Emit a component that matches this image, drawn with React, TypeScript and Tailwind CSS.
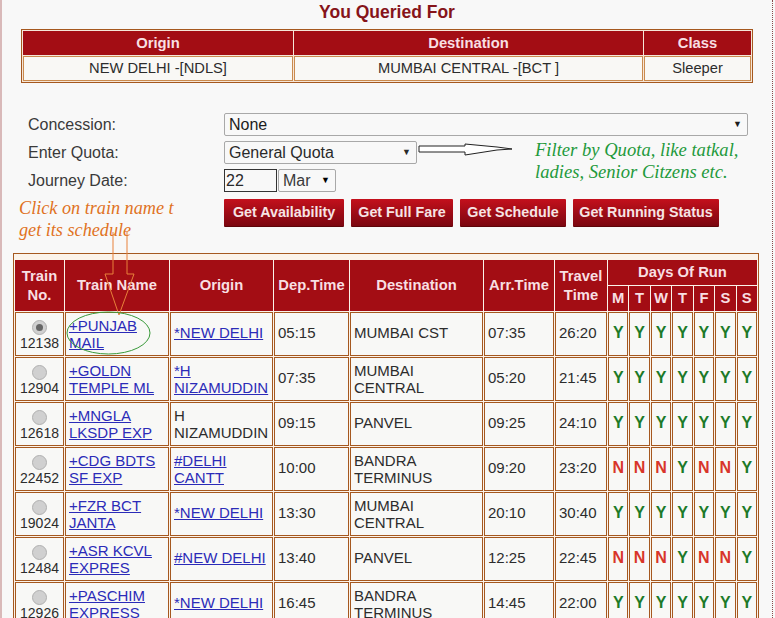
import React from "react";

const F = { fontFamily: '"Liberation Sans", Arial, sans-serif' };
const rows = [
  { no: "12138", sel: true, name: ["+PUNJAB", "MAIL"], o: ["*NEW DELHI"], link: true, dep: "05:15", dest: ["MUMBAI CST"], arr: "07:35", tr: "26:20", d: "YYYYYYY" },
  { no: "12904", name: ["+GOLDN", "TEMPLE ML"], o: ["*H", "NIZAMUDDIN"], link: true, dep: "07:35", dest: ["MUMBAI", "CENTRAL"], arr: "05:20", tr: "21:45", d: "YYYYYYY" },
  { no: "12618", name: ["+MNGLA", "LKSDP EXP"], o: ["H", "NIZAMUDDIN"], link: false, dep: "09:15", dest: ["PANVEL"], arr: "09:25", tr: "24:10", d: "YYYYYYY" },
  { no: "22452", name: ["+CDG BDTS", "SF EXP"], o: ["#DELHI", "CANTT"], link: true, dep: "10:00", dest: ["BANDRA", "TERMINUS"], arr: "09:20", tr: "23:20", d: "NNNYNNY" },
  { no: "19024", name: ["+FZR BCT", "JANTA"], o: ["*NEW DELHI"], link: true, dep: "13:30", dest: ["MUMBAI", "CENTRAL"], arr: "20:10", tr: "30:40", d: "YYYYYYY" },
  { no: "12484", name: ["+ASR KCVL", "EXPRES"], o: ["#NEW DELHI"], link: true, dep: "13:40", dest: ["PANVEL"], arr: "12:25", tr: "22:45", d: "NNNYNNY" },
  { no: "12926", name: ["+PASCHIM", "EXPRESS"], o: ["*NEW DELHI"], link: true, dep: "16:45", dest: ["BANDRA", "TERMINUS"], arr: "14:45", tr: "22:00", d: "YYYYYYY" },
];

const th = "bg-[#a30d14] text-[#f8dfe2] font-bold text-center p-0 leading-[19px] text-[14.8px]";
const td = "border border-[#a5581f] bg-[#f8f8f6] px-[3px] py-0 text-[15px] leading-[17px] align-middle h-[44px]";
const btn = "h-[28px] rounded-[1px] bg-gradient-to-b from-[#c4101c] to-[#7c0710] text-[#f6e4e4] font-bold text-[14.3px] border-b border-[#5e0509]";

function Lines({ l, link }: { l: string[]; link?: boolean }) {
  return (
    <>
      {l.map((t) => (
        <div key={t} className={`${link ? "text-[#2b2bb8] underline" : "text-[#2c2c2c]"} ${l.length === 1 ? "pb-[3px]" : ""}`}>{t}</div>
      ))}
    </>
  );
}

export default function App() {
  return (
    <div style={F} className="relative h-[618px] w-[775px] overflow-hidden bg-[#f8f8f8]">
      <div className="absolute left-0 top-0 h-full w-[2px] bg-[#d9b9b9]" />
      <div className="absolute left-[772px] top-0 h-full border-l border-dotted border-[#8a4a4a]" />

      <div className="pl-[21px] pr-[22px]">
        <h1 className="h-[29px] pt-[2px] text-center text-[17.5px] font-bold leading-[20px] text-[#86141a]">You Queried For</h1>
        <table className="w-[732px] table-fixed border-separate border-spacing-[1px] border border-[#a5581f] bg-[#f6e6d8]">
          <colgroup><col className="w-[270px]" /><col className="w-[349px]" /><col /></colgroup>
          <tbody>
            <tr className="h-[24px]">
              {["Origin", "Destination", "Class"].map((h) => <th key={h} className={th}>{h}</th>)}
            </tr>
            <tr className="h-[25px]">
              {["NEW DELHI -[NDLS]", "MUMBAI CENTRAL -[BCT ]", "Sleeper"].map((c) => (
                <td key={c} className="border border-[#c98a4e] bg-[#f9f8f5] p-0 text-center text-[14.7px] text-[#2c2c2c]">{c}</td>
              ))}
            </tr>
          </tbody>
        </table>
      </div>

      <div className="mt-[30px] grid grid-cols-[196px_auto] gap-y-[5px] pl-[28px] text-[16px] text-[#3a3a3a]">
        <div className="leading-[23px]">Concession:</div>
        <div className="relative flex h-[23px] w-[524px] items-center justify-between rounded-[2px] border border-[#a8a8a8] bg-[#f8f8f8] pl-[4px] pr-[5px] text-[#1c1c1c]">
          None<span className="text-[9px]">▼</span>
        </div>
        <div className="leading-[23px]">Enter Quota:</div>
        <div className="flex h-[23px] w-[193px] items-center justify-between rounded-[2px] border border-[#a8a8a8] bg-[#f8f8f8] pl-[4px] pr-[5px] text-[#2a2a2a]">
          General Quota<span className="text-[9px]">▼</span>
        </div>
        <div className="leading-[23px]">Journey Date:</div>
        <div className="flex gap-[1px]">
          <div className="h-[23px] w-[53px] border border-[#333] pl-[1px] leading-[21px] text-[#2a2a2a]">22</div>
          <div className="flex h-[23px] w-[58px] items-center justify-between rounded-[2px] border border-[#a8a8a8] pl-[4px] pr-[5px]">
            Mar<span className="text-[9px] text-black">▼</span>
          </div>
        </div>
      </div>

      <div className="ml-[224px] mt-[7px] flex gap-[7px]">
        <button className={`${btn} w-[120px]`}>Get Availability</button>
        <button className={`${btn} w-[102px]`}>Get Full Fare</button>
        <button className={`${btn} w-[106px]`}>Get Schedule</button>
        <button className={`${btn} w-[146px]`}>Get Running Status</button>
      </div>

      <div className="ml-[13px] mt-[26px] w-[746px] border border-[#a5581f] bg-[#fbf3ea] pt-[5px]">
        <table className="w-[744px] table-fixed border-separate border-spacing-[1px]">
          <colgroup>
            <col className="w-[49px]" /><col className="w-[104px]" /><col className="w-[103px]" /><col className="w-[75px]" />
            <col className="w-[133px]" /><col className="w-[70px]" /><col className="w-[52px]" />
            <col /><col /><col /><col /><col /><col /><col />
          </colgroup>
          <thead>
            <tr className="h-[25px]">
              <th rowSpan={2} className={th}>Train<br />No.</th>
              <th rowSpan={2} className={th}>Train Name</th>
              <th rowSpan={2} className={th}>Origin</th>
              <th rowSpan={2} className={th}>Dep.Time</th>
              <th rowSpan={2} className={th}>Destination</th>
              <th rowSpan={2} className={th}>Arr.Time</th>
              <th rowSpan={2} className={th}>Travel<br />Time</th>
              <th colSpan={7} className={th}>Days Of Run</th>
            </tr>
            <tr className="h-[25px]">
              {["M", "T", "W", "T", "F", "S", "S"].map((d, i) => <th key={i} className={th}>{d}</th>)}
            </tr>
          </thead>
          <tbody>
            {rows.map((r) => (
              <tr key={r.no}>
                <td className={`${td} !px-0 text-center !text-[14px] text-[#2c2c2c]`}>
                  <div className="mx-auto mt-[3px] flex h-[15px] w-[15px] items-center justify-center rounded-full border border-[#b0b0b0] bg-[#d0d0d0]">
                    {r.sel && <span className="h-[7px] w-[7px] rounded-full bg-[#666]" />}
                  </div>
                  {r.no}
                </td>
                <td className={td}><Lines l={r.name} link /></td>
                <td className={td}><Lines l={r.o} link={r.link} /></td>
                <td className={`${td} pb-[3px] text-[#2c2c2c]`}>{r.dep}</td>
                <td className={td}><Lines l={r.dest} /></td>
                <td className={`${td} pb-[3px] text-[#2c2c2c]`}>{r.arr}</td>
                <td className={`${td} pb-[3px] text-[#2c2c2c]`}>{r.tr}</td>
                {r.d.split("").map((c, i) => (
                  <td key={i} className={`${td} !px-0 pb-[3px] text-center !text-[16px] font-bold ${c === "Y" ? "text-[#1c7a28]" : "text-[#d8352a]"}`}>{c}</td>
                ))}
              </tr>
            ))}
          </tbody>
        </table>
      </div>

      <div className="absolute left-[19px] top-[197px] font-['Liberation_Serif'] text-[18.2px] italic leading-[22px] text-[#e0721e]">
        Click on train name t<br />get its schedule
      </div>
      <div className="absolute left-[535px] top-[139px] font-['Liberation_Serif'] text-[18.6px] italic leading-[22px] text-[#1f9a3c]">
        Filter by Quota, like tatkal,<br />ladies, Senior Citzens etc.
      </div>

      <svg className="absolute left-0 top-0" width="775" height="618" fill="none">
        <path d="M419 146H465V144L497 147L512 149L497 150L465 155V152H419Z" stroke="#222" strokeWidth="1" fill="#fff" />
        <path d="M113 232V274H105L119 315L134 274H127V232" stroke="#e8813a" strokeWidth="1" />
        <ellipse cx="108.5" cy="333" rx="41.5" ry="21" stroke="#3a9a3a" strokeWidth="1" />
      </svg>
    </div>
  );
}
